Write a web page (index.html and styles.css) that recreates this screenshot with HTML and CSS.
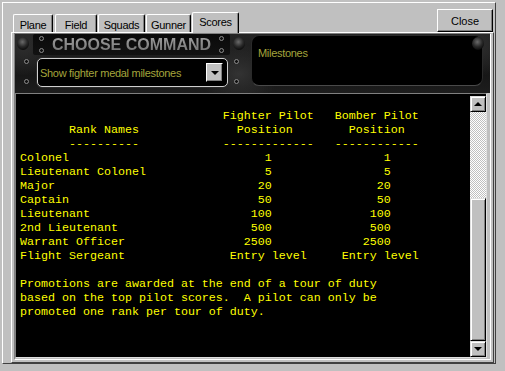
FILE: index.html
```html
<!DOCTYPE html>
<html lang="en">

<head>
    <meta charset="UTF-8">
    <title>Scores</title>
    <link rel="stylesheet" href="styles.css">
</head>

<body>
    <div class="window">
        <div class="tabbar">
            <div class="tab tab-plane">Plane</div>
            <div class="tab tab-field">Field</div>
            <div class="tab tab-squads">Squads</div>
            <div class="tab tab-gunner">Gunner</div>
            <div class="tab tab-scores active">Scores</div>
            <button class="close-btn">Close</button>
        </div>

        <div class="pane">
            <div class="frame">
                <div class="command-panel">
                    <span class="knob knob-left"></span>
                    <span class="knob knob-mid"></span>
                    <span class="knob knob-right"></span>
                    <span class="screw screw-a"></span>
                    <span class="screw screw-b"></span>
                    <span class="screw screw-c"></span>
                    <span class="screw screw-d"></span>

                    <div class="command-left">
                        <div class="title-box">
                            <div class="screw-col"><span class="screw"></span><span class="screw"></span></div>
                            <span class="title-text">CHOOSE COMMAND</span>
                            <div class="screw-col"><span class="screw"></span><span class="screw"></span></div>
                        </div>
                        <div class="select">
                            <span class="select-text">Show fighter medal milestones</span>
                            <span class="select-btn"><span class="arrow-down"></span></span>
                        </div>
                    </div>

                    <div class="milestones">Milestones</div>
                </div>

                <div class="output">
<pre class="report">                             Fighter Pilot   Bomber Pilot
       Rank Names              Position        Position
       ----------            -------------   ------------
Colonel                            1                1
Lieutenant Colonel                 5                5
Major                             20               20
Captain                           50               50
Lieutenant                       100              100
2nd Lieutenant                   500              500
Warrant Officer                 2500             2500
Flight Sergeant               Entry level     Entry level

Promotions are awarded at the end of a tour of duty
based on the top pilot scores.  A pilot can only be
promoted one rank per tour of duty.</pre>
                    <div class="scrollbar">
                        <div class="sb-btn"><span class="arrow-up"></span></div>
                        <div class="sb-track"></div>
                        <div class="sb-thumb"></div>
                        <div class="sb-btn"><span class="arrow-down"></span></div>
                    </div>
                </div>
            </div>
        </div>
    </div>
</body>

</html>
```

FILE: styles.css
```css
* {
    box-sizing: border-box;
}

body {
    margin: 0;
    background: #c0c0c0;
    font-family: "Liberation Sans", Arial, sans-serif;
    font-size: 11px;
    letter-spacing: -0.3px;
}

.window {
    margin: 2px 0 0 2px;
    width: 494px;
    height: 362px;
    border: 1px solid;
    border-color: #fff #404040 #404040 #fff;
    display: flex;
    flex-direction: column;
}

/* tabs */

.tabbar {
    display: flex;
    align-items: flex-end;
    height: 29px;
    padding-left: 10px;
    gap: 1px;
}

.tab {
    height: 18px;
    display: flex;
    align-items: center;
    justify-content: center;
    color: #000;
    border-top: 1px solid #fff;
    border-left: 1px solid #fff;
    border-right: 1px solid #000;
    border-radius: 2px 2px 0 0;
    box-shadow: inset -1px 0 #808080;
    padding-top: 3px;
}

.tab-plane { width: 40px; }
.tab-field { width: 42px; margin-left: 1px; }
.tab-squads { width: 47px; }
.tab-gunner { width: 45px; }
.tab-scores { width: 47px; }

.tab.active {
    height: 21px;
    margin-bottom: -1px;
    position: relative;
    z-index: 1;
    background: #c0c0c0;
    padding-top: 0;
    padding-bottom: 2px;
}

.close-btn {
    margin-left: auto;
    margin-right: 2px;
    width: 56px;
    height: 23px;
    padding: 0;
    background: #c0c0c0;
    font: inherit;
    color: #000;
    border: 1px solid;
    border-color: #fff #000 #000 #fff;
    box-shadow: inset -1px -1px #808080;
}

/* main pane */

.pane {
    margin-left: 8px;
    width: 483px;
    height: 331px;
    border: 1px solid;
    border-color: #fff #404040 #404040 #fff;
    padding: 0 2px 2px 2px;
}

.frame {
    height: 100%;
    border: 1px solid;
    border-color: #808080 #fff #fff #808080;
    display: flex;
    flex-direction: column;
}

/* dark command panel */

.command-panel {
    position: relative;
    height: 59px;
    display: flex;
    gap: 21px;
    padding: 0 7px 0 18px;
    background:
        radial-gradient(ellipse 40px 30px at 224px 40px, #333 0%, transparent 100%),
        radial-gradient(ellipse 30px 30px at 8px 12px, #2d2d2d 0%, transparent 100%),
        radial-gradient(ellipse 30px 30px at 462px 12px, #2d2d2d 0%, transparent 100%),
        linear-gradient(#242424, #171717 70%, #1d1d1d);
}

.command-left {
    width: 197px;
    display: flex;
    flex-direction: column;
}

.title-box {
    height: 21px;
    background: linear-gradient(#0a0a0a, #121212);
    border-radius: 2px;
    display: flex;
    align-items: center;
    justify-content: space-between;
    padding: 0 6px;
}

.title-text {
    font-size: 16px;
    font-weight: bold;
    letter-spacing: 0;
    color: #8a8a8a;
    background: linear-gradient(#a5a5a5, #6c6c6c);
    -webkit-background-clip: text;
    background-clip: text;
    -webkit-text-fill-color: transparent;
    line-height: 18px;
    padding-top: 1px;
}

.screw-col {
    display: flex;
    flex-direction: column;
    gap: 7px;
}

.screw {
    display: block;
    width: 5px;
    height: 5px;
    border-radius: 50%;
    border: 1px solid #8c8c8c;
    background: #111;
}

.command-panel > .screw {
    position: absolute;
}

.screw-a { left: 9px; top: 25px; }
.screw-b { left: 9px; top: 45px; }
.screw-c { left: 219px; top: 25px; }
.screw-d { left: 219px; top: 45px; }

.knob {
    position: absolute;
    top: 3px;
    width: 12px;
    height: 13px;
    border-radius: 50%;
    background: radial-gradient(circle at 45% 38%, #6a6a6a 0%, #2a2a2a 45%, #080808 80%);
}

.knob-left { left: 2px; }
.knob-mid { left: 218px; }
.knob-right { left: 457px; }

.select {
    margin: 3px 2px 0 4px;
    height: 29px;
    background: #000;
    border: 1px solid #cfcfcf;
    border-radius: 5px;
    box-shadow: 0 0 0 1px #2a2a2a;
    display: flex;
    align-items: center;
    justify-content: space-between;
    padding: 0 4px 0 2px;
}

.select-text {
    color: #a5a53c;
    padding-top: 1px;
}

.select-btn {
    width: 17px;
    height: 19px;
    background: #c0c0c0;
    border: 1px solid;
    border-color: #fff #000 #000 #fff;
    box-shadow: inset -1px -1px #808080;
    display: flex;
    align-items: center;
    justify-content: center;
}

.milestones {
    flex: 1;
    margin-top: 1px;
    height: 51px;
    background: #000;
    border: 1px solid #2a2a2a;
    border-bottom-color: #4a4a4a;
    border-radius: 8px;
    color: #a5a53c;
    padding: 11px 0 0 6px;
}

/* report output */

.output {
    height: 265px;
    margin-right: 3px;
    display: flex;
    background: #000;
    border: 1px solid;
    border-color: #808080 #dfdfdf #dfdfdf #808080;
}

.report {
    width: 454px;
    margin: 0;
    padding: 15px 0 0 4px;
    font-family: "Liberation Mono", "Courier New", monospace;
    font-size: 11.67px;
    letter-spacing: 0;
    line-height: 14px;
    color: #ffff00;
    overflow: hidden;
}

.scrollbar {
    width: 16px;
    margin-top: 2px;
    display: flex;
    flex-direction: column;
}

.sb-btn,
.sb-thumb {
    background: #c0c0c0;
    border: 1px solid;
    border-color: #dfdfdf #000 #000 #dfdfdf;
    box-shadow: inset 1px 1px #fff, inset -1px -1px #808080;
}

.sb-btn {
    height: 16px;
    display: flex;
    align-items: center;
    justify-content: center;
}

.sb-track {
    height: 86px;
    background: repeating-conic-gradient(#fff 0 25%, #c0c0c0 0 50%) 0 0 / 2px 2px;
}

.sb-thumb {
    flex: 1;
}

.arrow-up,
.arrow-down {
    width: 0;
    height: 0;
    border-left: 4px solid transparent;
    border-right: 4px solid transparent;
}

.arrow-up {
    border-bottom: 4px solid #000;
}

.arrow-down {
    border-top: 4px solid #000;
}
```
